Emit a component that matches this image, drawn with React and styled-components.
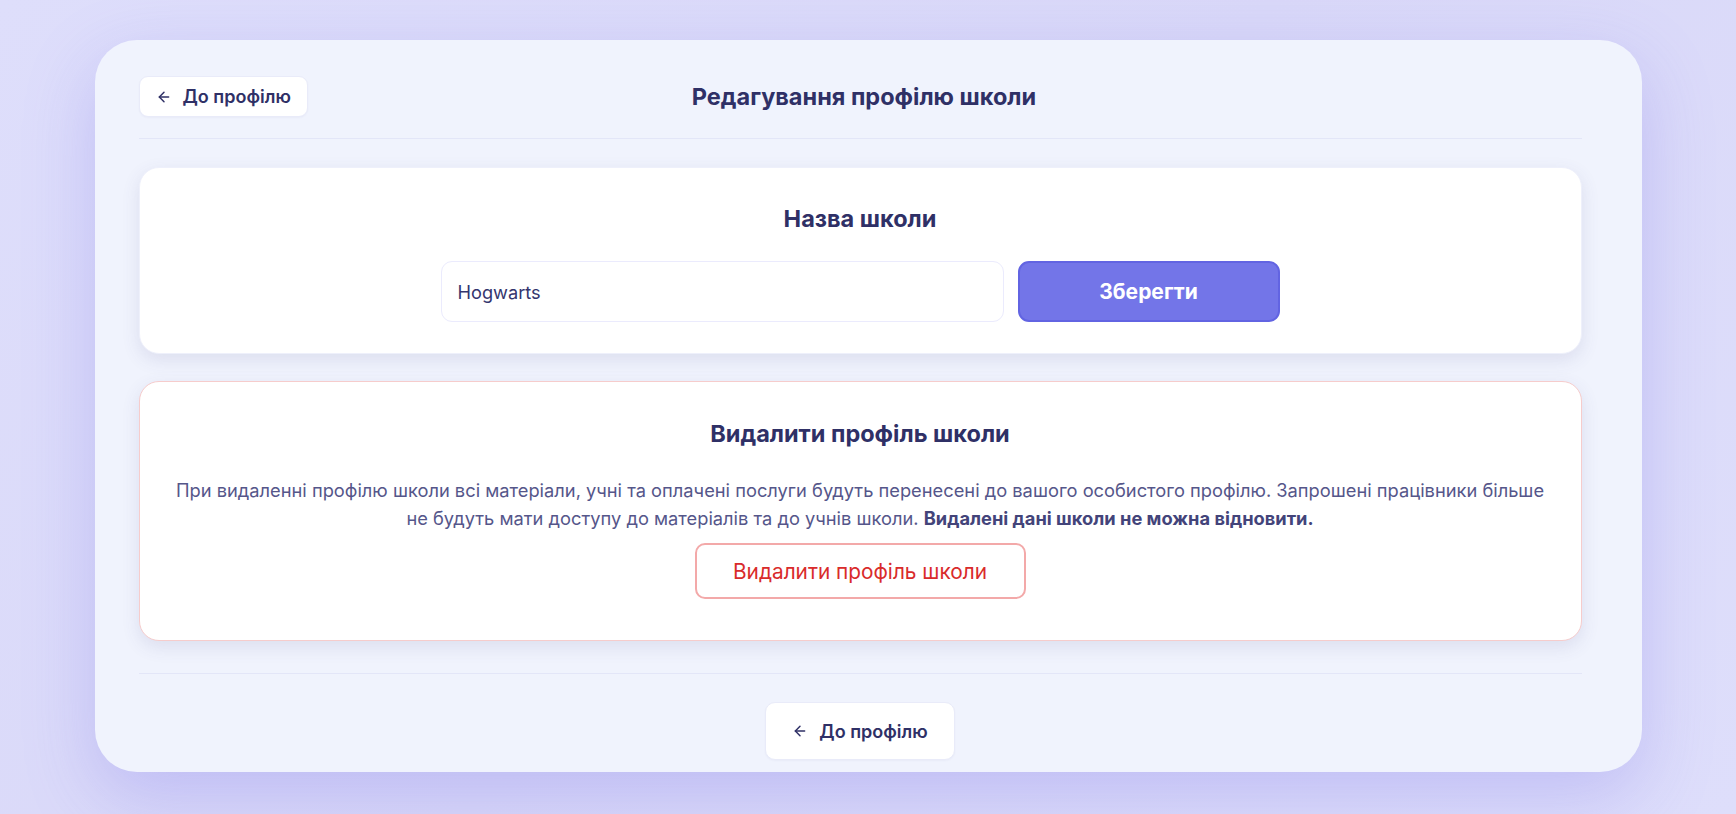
import React, { useState } from 'react';
import styled, { createGlobalStyle } from 'styled-components';
import { ArrowLeft } from 'lucide-react';

const GlobalStyle = createGlobalStyle`
  html, body {
    margin: 0;
    padding: 0;
  }
  body {
    font-family: Inter, "Noto Sans", "Liberation Sans", sans-serif;
    background: linear-gradient(135deg, #dedefb 0%, #d9d8f8 50%, #dedefb 100%);
    min-height: 814px;
  }
  * {
    box-sizing: border-box;
  }
`;

const Page = styled.div`
  padding: 40px 0 43px;
`;

const Panel = styled.main`
  width: 1547px;
  margin: 0 auto;
  background: #f0f3fd;
  border-radius: 42px;
  padding: 36px 60px 12px 44px;
  box-shadow: 0 24px 70px rgba(118, 110, 232, 0.28);
`;

const Header = styled.header`
  display: grid;
  grid-template-columns: 1fr auto 1fr;
  align-items: center;
  padding-bottom: 21px;
  border-bottom: 1px solid #e3e6f8;
`;

const Title = styled.h1`
  margin: 0;
  font-size: 23.5px;
  font-weight: 700;
  color: #2f3066;
  padding-left: 8px;
`;

const BackButton = styled.button`
  display: inline-flex;
  align-items: center;
  gap: 11px;
  justify-self: ${p => (p.$centered ? 'center' : 'start')};
  height: ${p => (p.$large ? '58px' : '41px')};
  padding: ${p => (p.$large ? '0 26px' : '0 16px')};
  background: #fff;
  border: 1px solid #e9ebf9;
  border-radius: ${p => (p.$large ? '10px' : '9px')};
  font-family: inherit;
  font-size: 18px;
  font-weight: 600;
  color: #2f3066;
  cursor: pointer;
  box-shadow: 0 1px 2px rgba(60, 60, 120, 0.04);
`;

const Cards = styled.div`
  display: flex;
  flex-direction: column;
  gap: 27px;
  padding: 28px 0 32px;
  border-bottom: 1px solid #e3e6f8;
`;

const Card = styled.section`
  background: #fff;
  border-radius: 20px;
  border: 1px solid ${p => (p.$danger ? '#f6cccc' : '#eef0fb')};
  box-shadow: 0 6px 18px rgba(70, 70, 130, 0.12);
  padding: ${p => (p.$danger ? '38px 32px 41px' : '37px 32px 31px')};
  display: flex;
  flex-direction: column;
  align-items: center;
  text-align: center;
`;

const CardTitle = styled.h2`
  margin: 0 0 28px;
  font-size: 23.5px;
  line-height: 28px;
  font-weight: 700;
  color: #2f3066;
`;

const NameForm = styled.form`
  display: flex;
  gap: 14px;
`;

const NameInput = styled.input`
  width: 563px;
  height: 61px;
  padding: 0 16px;
  border: 1px solid #ebebfd;
  border-radius: 11px;
  font-family: inherit;
  font-size: 18.2px;
  color: #34356e;
  outline: none;
  background: #fff;
`;

const SaveButton = styled.button`
  width: 262px;
  height: 61px;
  border-radius: 11px;
  background: #7375e8;
  border: 2px solid #6264e2;
  color: #fff;
  font-family: inherit;
  font-size: 21px;
  font-weight: 700;
  cursor: pointer;
`;

const Warning = styled.p`
  margin: 0 0 11px;
  max-width: 1380px;
  font-size: 18.3px;
  line-height: 28px;
  color: #55568a;

  strong {
    font-weight: 700;
    color: #43447a;
  }
`;

const DeleteButton = styled.button`
  width: 331px;
  height: 56px;
  border-radius: 10px;
  background: #fff;
  border: 2px solid #f3a9a9;
  color: #d92b2b;
  font-family: inherit;
  font-size: 20.8px;
  font-weight: 400;
  cursor: pointer;
`;

const Footer = styled.footer`
  display: flex;
  justify-content: center;
  padding-top: 28px;
`;

export default function App() {
  const [name, setName] = useState('Hogwarts');

  return (
    <Page>
      <GlobalStyle />
      <Panel>
        <Header>
          <BackButton type="button">
            <ArrowLeft size={16} strokeWidth={2.2} />
            До профілю
          </BackButton>
          <Title>Редагування профілю школи</Title>
          <span />
        </Header>

        <Cards>
          <Card>
            <CardTitle>Назва школи</CardTitle>
            <NameForm onSubmit={e => e.preventDefault()}>
              <NameInput value={name} onChange={e => setName(e.target.value)} />
              <SaveButton type="submit">Зберегти</SaveButton>
            </NameForm>
          </Card>

          <Card $danger>
            <CardTitle>Видалити профіль школи</CardTitle>
            <Warning>
              При видаленні профілю школи всі матеріали, учні та оплачені послуги будуть перенесені до вашого
              особистого профілю. Запрошені працівники більше не будуть мати доступу до матеріалів та до учнів
              школи. <strong>Видалені дані школи не можна відновити.</strong>
            </Warning>
            <DeleteButton type="button">Видалити профіль школи</DeleteButton>
          </Card>
        </Cards>

        <Footer>
          <BackButton type="button" $large $centered>
            <ArrowLeft size={16} strokeWidth={2.2} />
            До профілю
          </BackButton>
        </Footer>
      </Panel>
    </Page>
  );
}
